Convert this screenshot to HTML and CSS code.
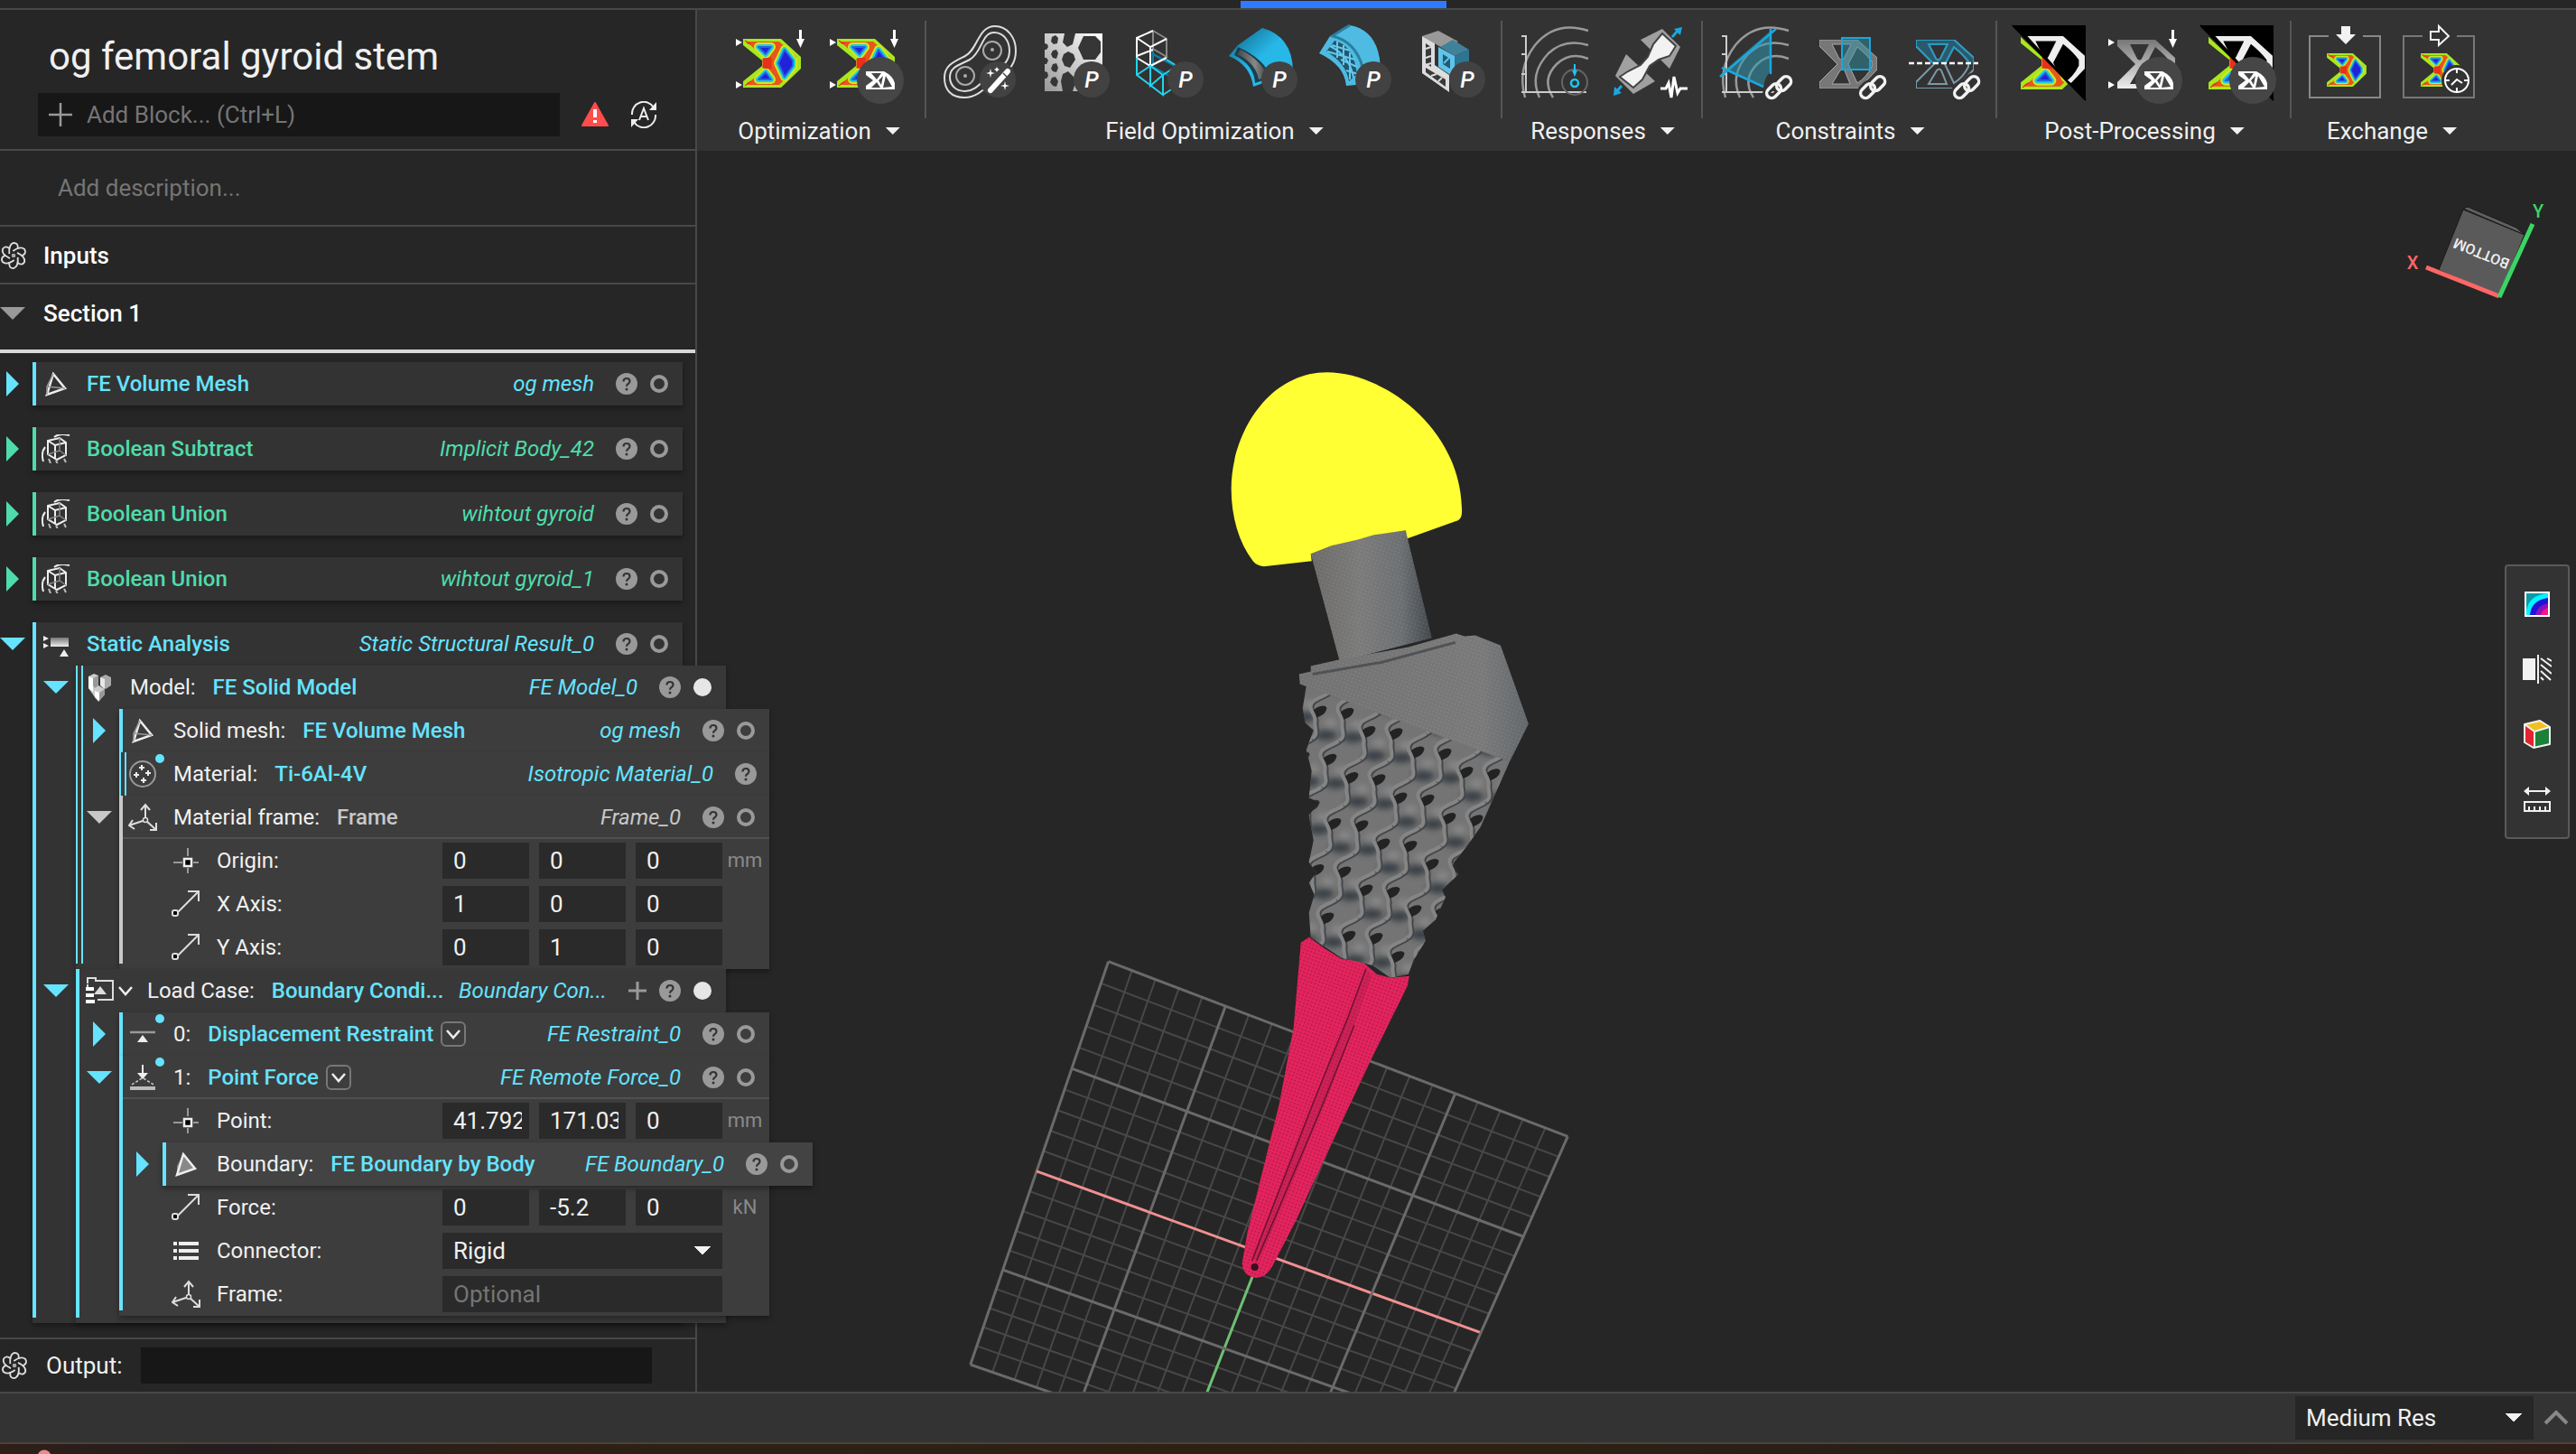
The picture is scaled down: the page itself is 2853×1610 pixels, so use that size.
FILE: index.html
```html
<!DOCTYPE html>
<html lang="en">
<head>
<meta charset="utf-8">
<title>og femoral gyroid stem</title>
<link rel="stylesheet" href="styles.css">
</head>
<body>
<svg class="defs" aria-hidden="true">
  <defs>
    <linearGradient id="g-gray" x1="0" y1="0" x2="0" y2="1"><stop offset="0" stop-color="#777"/><stop offset="1" stop-color="#eee"/></linearGradient>
    <linearGradient id="g-hex" x1="1" y1="0" x2="0" y2="1"><stop offset="0" stop-color="#fff"/><stop offset="1" stop-color="#999"/></linearGradient>
    <linearGradient id="g-shell" x1="0" y1="0" x2="1" y2="1"><stop offset="0" stop-color="#0e5f80"/><stop offset=".5" stop-color="#27b8e8"/><stop offset="1" stop-color="#27b8e8"/></linearGradient>
    <linearGradient id="g-panel" x1="0" y1="0" x2="1" y2="0"><stop offset="0" stop-color="#444"/><stop offset=".6" stop-color="#888"/><stop offset="1" stop-color="#444"/></linearGradient>
    <linearGradient id="g-neck" x1="0" y1="0" x2="1" y2="0"><stop offset="0" stop-color="#6c6a69"/><stop offset=".4" stop-color="#7b7b7a"/><stop offset=".75" stop-color="#6c6f71"/><stop offset="1" stop-color="#41474c"/></linearGradient>
    <linearGradient id="g-body" x1="0" y1="0" x2="1" y2="0"><stop offset="0" stop-color="#727272"/><stop offset=".8" stop-color="#797979"/><stop offset="1" stop-color="#62676b"/></linearGradient>
    <pattern id="p-mesh" width="4" height="4" patternUnits="userSpaceOnUse" patternTransform="rotate(20)"><circle cx="1" cy="1" r="1" fill="#97154d" fill-opacity=".6"/></pattern>
    <pattern id="p-fine" width="4" height="4" patternUnits="userSpaceOnUse" patternTransform="rotate(20)"><circle cx="1" cy="1" r="1" fill="#fff" fill-opacity=".08"/></pattern>
    <filter id="f-soft" x="-50%" y="-50%" width="200%" height="200%"><feGaussianBlur stdDeviation="3"/></filter>
    <clipPath id="c-lattice"><path d="M1440 750 1447 759 1443 784 1446 800 1455 808 1447 830 1453 853 1450 883 1462 888 1450 902 1455 930 1450 954 1458 966 1450 977 1456 990 1450 1010 1452 1037 1465 1046 1486 1060 1520 1068 1540 1082 1560 1078 1566 1062 1579 1041 1576 1030 1590 1018 1601 993 1597 985 1615 968 1610 955 1625 936 1640 915 1672 843 1660 835Z"/></clipPath>
    <clipPath id="c-upper"><path d="M-2-6 84-6 84 78 60 62 40 40Z"/></clipPath>
    <clipPath id="c-lower"><path d="M0 0 4 10 40 44 60 66 60 80 0 80Z"/></clipPath>

    <symbol id="topopt" viewBox="0 0 64 54">
      <path d="M0 0H42L64 20V33L42 54H0V47L21 30V24L0 7Z" fill="#a8e81c"/>
      <path d="M4 3H40L59 20V32L40 51H4L24 32V22Z" fill="#e8561d"/>
      <g stroke-linejoin="round">
        <path d="M17 9H31L25 17ZM17 45H31L25 37ZM39 27 46 12 55 24V30L46 42Z" fill="none" stroke="#d4e81c" stroke-width="10"/>
        <path d="M17 9H31L25 17ZM17 45H31L25 37ZM39 27 46 12 55 24V30L46 42Z" fill="#2222d8" stroke="#22cfd8" stroke-width="6"/>
        <path d="M17 9H31L25 17ZM17 45H31L25 37ZM39 27 46 12 55 24V30L46 42Z" fill="#2222d8" stroke="#2266e0" stroke-width="2"/>
      </g>
      <path d="M2 2 9 6 5 5ZM2 52 9 47 5 49ZM22 22 31 21V33L22 32Z" fill="#e8301c" stroke="#e8301c"/>
    </symbol>
    <symbol id="truss" viewBox="0 0 64 54">
      <path fill-rule="evenodd" d="M0 0H42L64 20V33L44 54H0V47L20 27 0 7ZM14 5 22 21Q25 24 27 21L35 5ZM14 49 23 34Q26 31 28 34L34 49ZM32 27 42 8Q52 16 58 24V30Q52 42 42 48Z"/>
    </symbol>
    <symbol id="loads" viewBox="0 0 80 80" overflow="visible"><path d="M0 15 7 19 0 23ZM0 62 7 66 0 70ZM70 5H73V15H76L71.500 25 67 15H70Z" fill="#fff"/></symbol>
    <symbol id="badge-truss" viewBox="0 0 80 80" overflow="visible"><circle cx="56" cy="61" r="26" fill="#464646"/><path fill="#fff" fill-rule="evenodd" d="M40 51H60Q70 56 72 64V71H40V67L48 61 40 55ZM46 53 52 60 57 53ZM46 69 52 63 56 69ZM59 69 62 56 69 68ZM54 61 59 56 57 66Z"/></symbol>
    <symbol id="badge-p" viewBox="0 0 80 80" overflow="visible"><circle cx="60" cy="60" r="20" fill="#424242"/><text x="60" y="69" text-anchor="middle" class="badge-letter">P</text></symbol>
    <symbol id="chain" viewBox="0 0 80 80" overflow="visible">
      <g fill="none" stroke="#333" stroke-width="9"><rect x="51" y="67" width="18" height="11" rx="5.500" transform="rotate(-45 60 73)"/><rect x="62" y="59" width="18" height="11" rx="5.500" transform="rotate(-45 71 65)"/></g>
      <g fill="none" stroke="#f2f2f2" stroke-width="3.500"><rect x="51" y="67" width="18" height="11" rx="5.500" transform="rotate(-45 60 73)"/><rect x="62" y="59" width="18" height="11" rx="5.500" transform="rotate(-45 71 65)"/></g>
    </symbol>
    <symbol id="field" viewBox="0 0 80 80" overflow="visible">
      <g fill="none" stroke="#999" stroke-width="2.500"><path d="M76 6Q40-6 17 22-3 48 6 80"/><path d="M76 22Q50 14 32 31 10 54 22 80"/><path d="M76 37Q56 29 41 43 24 60 37 80"/></g>
      <path d="M7 12V74M2 12H8M2 32H8M2 54H8M2 74H74" fill="none" stroke="#ccc" stroke-width="2"/>
    </symbol>

    <symbol id="help" viewBox="0 0 24 24"><circle cx="12" cy="12" r="12" fill="#999"/><path d="M8.500 9.500Q8.500 6 12 6t3.500 3.300Q15.500 11 13.500 12.200 12 13.200 12 14.800" fill="none" stroke="#333" stroke-width="2.200"/><circle cx="12" cy="18" r="1.500" fill="#333"/></symbol>
    <symbol id="ring" viewBox="0 0 20 20"><circle cx="10" cy="10" r="8" fill="none" stroke="#999" stroke-width="4"/></symbol>
    <symbol id="disc" viewBox="0 0 20 20"><circle cx="10" cy="10" r="10" fill="#e6e6e6"/></symbol>
    <symbol id="gyro" viewBox="0 0 32 32"><g fill="none" stroke="#ddd" stroke-width="2"><path d="M11 14Q10 3 16 1 22 1 21 8"/><path d="M11 14Q10 3 16 1 22 1 21 8" transform="rotate(60 16 16)"/><path d="M11 14Q10 3 16 1 22 1 21 8" transform="rotate(120 16 16)"/><path d="M11 14Q10 3 16 1 22 1 21 8" transform="rotate(180 16 16)"/><path d="M11 14Q10 3 16 1 22 1 21 8" transform="rotate(240 16 16)"/><path d="M11 14Q10 3 16 1 22 1 21 8" transform="rotate(300 16 16)"/></g><circle cx="16" cy="16" r="2.500" fill="#aaa"/></symbol>
    <symbol id="mesh" viewBox="0 0 32 32"><path d="M13 5 26 21 6 28Z" fill="none" stroke="#eee" stroke-width="2.500"/><path d="M6 19 26 21M6 19 13 5M6 19V28" stroke="#999" stroke-width="1.500" fill="none"/></symbol>
    <symbol id="meshfill" viewBox="0 0 32 32"><path d="M13 5 26 21 6 28V18Z" fill="#888"/><path d="M13 5 26 21 6 28Z" fill="none" stroke="#eee" stroke-width="2.500"/></symbol>
    <symbol id="bool" viewBox="0 0 32 32"><g fill="none" stroke="#eee" stroke-width="2"><path d="M7 7 20 4 27 9V23L17 28 7 22ZM7 7 15 12 27 9M15 12V27"/><path d="M2 30Q-1 20 4 14M14 3Q20-2 31 1" /><path d="M8 27 10 32M16 29 18 33M25 27 27 31" stroke="#bbb"/><path d="M20 4V18L7 22M20 18 27 23" stroke="#888" stroke-width="1.500"/></g></symbol>
    <symbol id="static" viewBox="0 0 32 32"><rect x="10" y="9" width="20" height="10" fill="url(#g-gray)"/><path d="M2 7 8 10 2 13ZM2 15 8 18 2 21ZM20 30 25 22 30 30Z" fill="#eee"/></symbol>
    <symbol id="model" viewBox="0 0 32 32"><path d="M4 4 10 1 15 3V14L22 18V24L15 32 11 27 4 17Z" fill="#ccc"/><path d="M17 5 23 2 29 5V14L23 18 17 14Z" fill="#aaa"/><path d="M4 4 9 6V21L4 17ZM11 20 16 22V31L11 27Z" fill="#fff"/><path d="M17 5 22 7V18L17 14Z" fill="#e8e8e8"/><path d="M9 6 15 3V14L11 17 9 14ZM16 22 22 18V24L16 31Z" fill="#999"/></symbol>
    <symbol id="material" viewBox="0 0 32 32"><circle cx="16" cy="16" r="14" fill="none" stroke="#999" stroke-width="2"/><path d="M15 6V12M12 9H18M9 14V20M6 17H12M22 12V18M19 15H25M17 20V26M14 23H20" stroke="#eee" stroke-width="2"/></symbol>
    <symbol id="frame" viewBox="0 0 32 32"><path d="M19 19V2M14 8 19 2 24 8M19 19 1 25M5 19 1 25 7 29M19 19 31 30M31 22V30H24" fill="none" stroke="#ddd" stroke-width="2"/><circle cx="19" cy="19" r="2.500" fill="#333" stroke="#ddd" stroke-width="1.500"/></symbol>
    <symbol id="point" viewBox="0 0 32 32"><path d="M18 2V11M18 24V30M2 18H12M24 18H30" stroke="#999" stroke-width="2"/><rect x="14" y="14" width="8" height="8" fill="#000" stroke="#eee" stroke-width="2.500"/></symbol>
    <symbol id="vector" viewBox="0 0 32 32"><path d="M6 26 30 2M18 2H30V13" fill="none" stroke="#ddd" stroke-width="2"/><rect x="1" y="23" width="6" height="6" rx="2" fill="#000" stroke="#ddd" stroke-width="2"/></symbol>
    <symbol id="restraint" viewBox="0 0 32 32"><path d="M2 14H30" stroke="#999" stroke-width="2.500"/><path d="M10 25 16 17 22 25Z" fill="#eee"/></symbol>
    <symbol id="force" viewBox="0 0 32 32"><path d="M15 2H17V11H22L16 18 10 11H15Z" fill="#eee"/><path d="M15 17 4 24M17 17 28 24" stroke="#ccc" stroke-width="1.500" stroke-dasharray="3 2"/><rect x="2" y="26" width="28" height="4" fill="#bbb"/></symbol>
    <symbol id="list" viewBox="0 0 32 32"><path d="M2 8H6M8 8H30M2 16H6M8 16H30M2 24H6M8 24H30" stroke="#eee" stroke-width="4"/></symbol>
    <symbol id="case" viewBox="0 0 32 32"><path d="M3 8V2H12V5H31V26H14M3 9V12" fill="none" stroke="#ddd" stroke-width="2"/><path d="M10 20 17 11 24 20Z" fill="#ddd"/><path d="M1 14H10M1 21H10M1 28H11" stroke="#fff" stroke-width="4"/></symbol>
    <symbol id="chev" viewBox="0 0 16 16"><path d="M1 4 8 12 15 4" fill="none" stroke="#eee" stroke-width="2.500"/></symbol>
  </defs>
</svg>

<div class="app">
  <div class="tabstrip"><span class="tab-active"></span></div>

  <div class="main">
    <aside class="sidebar">
      <header class="doc-head">
        <h1>og femoral gyroid stem</h1>
        <div class="add-line">
          <label class="add-box"><svg width="26" height="26" viewBox="0 0 26 26"><path d="M13 0V26M0 13H26" stroke="#999" stroke-width="2.500"/></svg><input type="text" placeholder="Add Block... (Ctrl+L)" aria-label="Add block"></label>
          <button class="plain" aria-label="Warnings"><svg width="30" height="28" viewBox="0 0 30 28"><path d="M15 1 29 26H1Z" fill="#ff4d4d" stroke="#ff4d4d" stroke-width="2" stroke-linejoin="round"/><path d="M15 8V17M15 20V23" stroke="#fff" stroke-width="4"/></svg></button>
          <button class="plain" aria-label="Automatic run"><svg width="30" height="30" viewBox="0 0 30 30"><g fill="none" stroke="#eee" stroke-width="2"><path d="M2 15A13 13 0 0 1 26 7M28 15A13 13 0 0 1 4 23"/><path d="M10 21 15 8 20 21M12 17H18"/></g><path d="M29 1V10H21ZM1 29V20H9Z" fill="#eee"/></svg></button>
        </div>
      </header>
      <input class="description" type="text" placeholder="Add description..." aria-label="Description">
      <h2 class="section inputs"><svg width="30" height="30"><use href="#gyro"/></svg>Inputs</h2>
      <h2 class="section first"><span class="tri down gray"></span>Section 1</h2>

      <div class="tree">
        <div class="node"><button class="tri right" aria-label="Expand"></button>
          <div class="card"><div class="row"><svg class="ico"><use href="#mesh"/></svg><b>FE Volume Mesh</b><i>og mesh</i><svg class="q"><use href="#help"/></svg><svg class="o"><use href="#ring"/></svg></div></div></div>
        <div class="node green"><button class="tri right" aria-label="Expand"></button>
          <div class="card"><div class="row"><svg class="ico"><use href="#bool"/></svg><b>Boolean Subtract</b><i>Implicit Body_42</i><svg class="q"><use href="#help"/></svg><svg class="o"><use href="#ring"/></svg></div></div></div>
        <div class="node green"><button class="tri right" aria-label="Expand"></button>
          <div class="card"><div class="row"><svg class="ico"><use href="#bool"/></svg><b>Boolean Union</b><i>wihtout gyroid</i><svg class="q"><use href="#help"/></svg><svg class="o"><use href="#ring"/></svg></div></div></div>
        <div class="node green"><button class="tri right" aria-label="Expand"></button>
          <div class="card"><div class="row"><svg class="ico"><use href="#bool"/></svg><b>Boolean Union</b><i>wihtout gyroid_1</i><svg class="q"><use href="#help"/></svg><svg class="o"><use href="#ring"/></svg></div></div></div>

        <div class="node"><button class="tri down" aria-label="Collapse"></button>
          <div class="card open">
            <div class="row"><svg class="ico"><use href="#static"/></svg><b>Static Analysis</b><i>Static Structural Result_0</i><svg class="q"><use href="#help"/></svg><svg class="o"><use href="#ring"/></svg></div>

            <div class="node"><button class="tri down" aria-label="Collapse"></button>
              <div class="card l1 open double">
                <div class="row"><svg class="ico"><use href="#model"/></svg><span>Model:</span><b>FE Solid Model</b><i>FE Model_0</i><svg class="q"><use href="#help"/></svg><svg class="o"><use href="#disc"/></svg></div>
                <div class="node"><button class="tri right" aria-label="Expand"></button>
                  <div class="card l2"><div class="row"><svg class="ico"><use href="#mesh"/></svg><span>Solid mesh:</span><b>FE Volume Mesh</b><i>og mesh</i><svg class="q"><use href="#help"/></svg><svg class="o"><use href="#ring"/></svg></div></div></div>
                <div class="node"><span></span>
                  <div class="card l2 double"><div class="row dotted"><svg class="ico"><use href="#material"/></svg><span>Material:</span><b>Ti-6Al-4V</b><i>Isotropic Material_0</i><svg class="q last"><use href="#help"/></svg></div></div></div>
                <div class="node neutral"><button class="tri down" aria-label="Collapse"></button>
                  <div class="card l2 open">
                    <div class="row ruled"><svg class="ico"><use href="#frame"/></svg><span>Material frame:</span><b>Frame</b><i>Frame_0</i><svg class="q"><use href="#help"/></svg><svg class="o"><use href="#ring"/></svg></div>
                    <div class="prop"><svg class="ico"><use href="#point"/></svg><span>Origin:</span><input value="0" aria-label="Origin x"><input value="0" aria-label="Origin y"><input value="0" aria-label="Origin z"><em>mm</em></div>
                    <div class="prop"><svg class="ico"><use href="#vector"/></svg><span>X Axis:</span><input value="1" aria-label="X axis x"><input value="0" aria-label="X axis y"><input value="0" aria-label="X axis z"></div>
                    <div class="prop"><svg class="ico"><use href="#vector"/></svg><span>Y Axis:</span><input value="0" aria-label="Y axis x"><input value="1" aria-label="Y axis y"><input value="0" aria-label="Y axis z"></div>
                  </div></div>
              </div></div>

            <div class="node"><button class="tri down" aria-label="Collapse"></button>
              <div class="card l1 open tail">
                <div class="row case"><svg class="ico"><use href="#case"/></svg><svg class="chev"><use href="#chev"/></svg><span>Load Case:</span><b>Boundary Condi...</b><i>Boundary Con...</i><svg class="plus" viewBox="0 0 20 20"><path d="M10 0V20M0 10H20" stroke="#999" stroke-width="3"/></svg><svg class="q"><use href="#help"/></svg><svg class="o"><use href="#disc"/></svg></div>
                <div class="node"><button class="tri right" aria-label="Expand"></button>
                  <div class="card l2"><div class="row dotted"><svg class="ico"><use href="#restraint"/></svg><span>0:</span><b>Displacement Restraint</b><button class="type" aria-label="Change type"><svg class="chev"><use href="#chev"/></svg></button><i>FE Restraint_0</i><svg class="q"><use href="#help"/></svg><svg class="o"><use href="#ring"/></svg></div></div></div>
                <div class="node"><button class="tri down" aria-label="Collapse"></button>
                  <div class="card l2 open">
                    <div class="row ruled dotted"><svg class="ico"><use href="#force"/></svg><span>1:</span><b>Point Force</b><button class="type" aria-label="Change type"><svg class="chev"><use href="#chev"/></svg></button><i>FE Remote Force_0</i><svg class="q"><use href="#help"/></svg><svg class="o"><use href="#ring"/></svg></div>
                    <div class="prop"><svg class="ico"><use href="#point"/></svg><span>Point:</span><input value="41.792" aria-label="Point x"><input value="171.03" aria-label="Point y"><input value="0" aria-label="Point z"><em>mm</em></div>
                    <div class="node"><button class="tri right" aria-label="Expand"></button>
                      <div class="card l3"><div class="row"><svg class="ico"><use href="#meshfill"/></svg><span>Boundary:</span><b>FE Boundary by Body</b><i>FE Boundary_0</i><svg class="q"><use href="#help"/></svg><svg class="o"><use href="#ring"/></svg></div></div></div>
                    <div class="prop"><svg class="ico"><use href="#vector"/></svg><span>Force:</span><input value="0" aria-label="Force x"><input value="-5.2" aria-label="Force y"><input value="0" aria-label="Force z"><em>kN</em></div>
                    <div class="prop"><svg class="ico"><use href="#list"/></svg><label for="connector">Connector:</label><select id="connector" class="wide"><option>Rigid</option></select></div>
                    <div class="prop"><svg class="ico"><use href="#frame"/></svg><label for="frame-in">Frame:</label><input id="frame-in" class="wide" placeholder="Optional"></div>
                  </div></div>
              </div></div>
          </div></div>
      </div>

      <div class="output"><svg width="30" height="30"><use href="#gyro"/></svg><label for="out">Output:</label><input id="out" type="text"></div>
    </aside>

    <section class="stage">
      <nav class="ribbon">
        <div class="group">
          <div class="tools">
            <button aria-label="Topology optimization"><svg viewBox="0 0 80 80"><use href="#loads"/><use href="#topopt" x="8" y="15" width="64" height="54"/></svg></button>
            <button aria-label="Smoothed topology optimization"><svg viewBox="0 0 80 80"><use href="#loads"/><use href="#topopt" x="8" y="15" width="64" height="54"/><use href="#badge-truss"/></svg></button>
          </div>
          <button class="menu">Optimization</button>
        </div>
        <div class="group">
          <div class="tools">
            <button aria-label="Field optimization"><svg viewBox="0 0 80 80"><g fill="none" stroke="#ddd" stroke-width="2"><path d="M57 1C71 1 80 14 80 28 80 46 70 50 62 57 48 66 40 80 23 80 9 80 1 72 1 58 1 44 12 40 24 34 38 27 38 1 57 1Z"/><path d="M56 8C67 8 73 18 73 28 73 42 64 45 54 53 42 62 36 73 24 73 13 73 7 66 7 57 7 46 18 44 29 38 43 30 42 8 56 8Z"/><circle cx="54" cy="28" r="10" stroke="#aaa"/><circle cx="24" cy="56" r="10" stroke="#aaa"/></g><circle cx="54" cy="27" r="2" fill="#aaa"/><circle cx="24" cy="56" r="2" fill="#aaa"/><circle cx="60" cy="60" r="20" fill="#424242"/><path d="M52 72 71 51" stroke="#fff" stroke-width="6" stroke-linecap="round"/><path d="M66 53 70 57" stroke="#424242" stroke-width="1.500"/><path d="M52 48 53 52 57 53 53 54 52 58 51 54 47 53 51 52ZM68 62 69 66 73 67 69 68 68 72 67 68 63 67 67 66ZM59 46 60 48 62 49 60 50 59 52 58 50 56 49 58 48Z" fill="#fff"/></svg></button>
            <button aria-label="Honeycomb parameters"><svg viewBox="0 0 80 80"><rect x="8" y="9" width="64" height="64" fill="url(#g-hex)"/><g fill="#363636"><path d="M51 12H64L70 18V30L64 38H51L45 25ZM51 44H64L70 50V62L64 70H51L45 56ZM30 9H42L39 21 33 24 28 19ZM29 32 34 29 40 32 42 38 36 47 30 45 27 38ZM28 54 34 51 40 57 42 64 39 73H28L26 62Z"/><path d="M16 13 20 11 23 14 22 20 18 21 15 18ZM17 28 21 27 23 31 21 37 17 36 15 32ZM17 43 21 42 23 47 21 52 17 51 15 48ZM16 58 20 57 23 62 21 68 17 67 14 63ZM8 20 11 21 12 24 10 27H8ZM8 36 10 36 12 39 10 43H8ZM8 51 11 52 12 56 10 59H8Z"/></g><use href="#badge-p"/></svg></button>
            <button aria-label="Lattice parameters"><svg viewBox="0 0 80 80"><g fill="none" stroke-width="2"><path d="M24 6 39 15V35M24 6V26L39 35 21 45" stroke="#888"/><path d="M24 28V46L49 60M24 32 50 46" stroke="#0d7ea8"/><path d="M24 6 6 14V36L21 45V24L39 15M6 14 21 24M6 34 24 27M21 45 39 36" stroke="#fff"/><path d="M6 36V55L35 77V55L21 45M6 55 21 45V67L35 55 49 46M35 77 49 68M39 38 52 46" stroke="#23d3ee"/></g><use href="#badge-p"/></svg></button>
            <button aria-label="Shell parameters"><svg viewBox="0 0 80 80"><path d="M41 3Q74 12 75 50L58 58 31 68Q28 44 4 34L14 22Z" fill="url(#g-shell)"/><path d="M14 24Q45 38 50 58L33 64Q32 44 10 33Z" fill="#1b3f4e"/><path d="M17 27Q42 40 46 57L37 60Q34 42 13 32Z" fill="url(#g-panel)"/><use href="#badge-p"/></svg></button>
            <button aria-label="Ribbed shell parameters"><svg viewBox="0 0 80 80"><path d="M34 0Q68 6 68 52L40 66 30 67Q28 44 0 31L12 12Z" fill="#4fbbe2"/><path d="M34 0Q20 8 15 12 40 18 48 46" fill="none" stroke="#2b7fa0" stroke-width="3"/><path d="M17 17Q38 22 42 54L33 62Q30 42 8 29Z" fill="#23566b"/><path d="M12 23Q34 34 38 58M20 18V36M27 22V44M34 30V60M14 22 34 28M9 29 40 38M24 38 42 46M30 50 43 54" stroke="#64c8ec" stroke-width="2" fill="none"/><use href="#badge-p"/></svg></button>
            <button aria-label="Box parameters"><svg viewBox="0 0 80 80"><path d="M10 12 28 6 50 18 34 26Z" fill="#999"/><path d="M30 24 44 16 62 27 46 34Z" fill="#42819a"/><path d="M46 34 62 27V52L46 60Z" fill="#2d7590"/><path d="M10 12 24 20V44L40 55V74L10 53Z" fill="#ddd"/><path d="M14 20 20 24V46L14 42ZM14 47 36 60V68L14 52Z" fill="#3a3a3a"/><path d="M14 26 20 24M14 36 20 34M14 44 20 42M20 56 26 54M28 62 32 58" stroke="#ddd" stroke-width="2"/><path d="M28 24 46 34V58L28 46Z" fill="#5ec4ea"/><path d="M33 32 41 37V48L33 43Z" fill="#245a70"/><path d="M34 42 40 36" stroke="#5ec4ea" stroke-width="2"/><use href="#badge-p"/></svg></button>
          </div>
          <button class="menu">Field Optimization</button>
        </div>
        <div class="group">
          <div class="tools">
            <button aria-label="Point response"><svg viewBox="0 0 80 80"><use href="#field"/><circle cx="61" cy="63" r="14" fill="none" stroke="#666" stroke-width="2"/><path d="M61 43V51" stroke="#22c3ee" stroke-width="2"/><path d="M58 50H64L61 57Z" fill="#22c3ee"/><circle cx="61" cy="64" r="4" fill="none" stroke="#22c3ee" stroke-width="2.500"/></svg></button>
            <button aria-label="Stress response"><svg viewBox="0 0 80 80"><path d="M30 16 54 4 74 24 62 48ZM2 56 14 32 46 62 22 76Z" fill="#a0a0a0"/><path d="M54 9 69 23 62 34 50 38 40 45 32 60 22 69 7 57 16 51 30 44 38 35 44 21Z" fill="#f2f2f2" stroke="#444" stroke-width="2"/><path d="M65 13 72 5M9 67 3 74" stroke="#1aa7e0" stroke-width="3"/><path d="M67 4 76 2 74 11ZM1 68 0 78 9 75Z" fill="#1aa7e0"/><path d="M52 70H58L61 64 64 80 67 57 71 75 74 70H82" fill="none" stroke="#fff" stroke-width="3"/></svg></button>
          </div>
          <button class="menu">Responses</button>
        </div>
        <div class="group">
          <div class="tools">
            <button aria-label="Field constraint"><svg viewBox="0 0 80 80"><use href="#field"/><path d="M6 49 56 6V51Q50 56 48 68Z" fill="#2f98ad" fill-opacity=".55"/><path d="M0 57 62 4M56 4V54M2 47 48 68" stroke="#1aa7e0" stroke-width="2.500"/><use href="#chain"/></svg></button>
            <button aria-label="Region constraint"><svg viewBox="0 0 80 80"><use href="#truss" x="6" y="16" width="64" height="54" fill="#777" stroke="#aaa"/><rect x="31" y="14" width="31" height="35" fill="#2f98ad" fill-opacity=".45" stroke="#1aa7e0" stroke-width="2"/><use href="#chain"/></svg></button>
            <button aria-label="Planar constraint"><svg viewBox="0 0 80 80"><use href="#truss" x="9" y="16" width="64" height="54" fill="#333" stroke="#7a9aa5" stroke-width="2"/><svg x="9" y="16" width="64" height="26" viewBox="0 0 64 26"><use href="#truss" width="64" height="54" fill="#2a5a6c" stroke="#2b9bc4" stroke-width="2"/></svg><path d="M1 42H78" stroke="#fff" stroke-width="2.500" stroke-dasharray="6 3"/><use href="#chain"/></svg></button>
          </div>
          <button class="menu">Constraints</button>
        </div>
        <div class="group">
          <div class="tools">
            <button aria-label="Threshold result"><svg viewBox="0 0 80 80"><path d="M-2 0H79V83Z"/><g clip-path="url(#c-lower)"><use href="#topopt" x="7" y="12" width="70" height="59"/></g><g clip-path="url(#c-upper)"><use href="#truss" x="8" y="12" width="70" height="59" fill="#eee"/></g><path d="M-2 0 79 83" stroke="#000" stroke-width="2"/></svg></button>
            <button aria-label="Smoothed body"><svg viewBox="0 0 80 80"><use href="#loads"/><use href="#truss" x="10" y="16" width="64" height="54" fill="url(#g-gray)"/><use href="#badge-truss"/></svg></button>
            <button aria-label="Smoothed threshold result"><svg viewBox="0 0 80 80"><path d="M-2 0H79V83Z"/><g clip-path="url(#c-lower)"><use href="#topopt" x="7" y="12" width="70" height="59"/></g><g clip-path="url(#c-upper)"><use href="#truss" x="8" y="12" width="70" height="59" fill="#eee"/></g><path d="M-2 0 79 83" stroke="#000" stroke-width="2"/><use href="#badge-truss"/></svg></button>
          </div>
          <button class="menu">Post-Processing</button>
        </div>
        <div class="group">
          <div class="tools">
            <button aria-label="Import result"><svg viewBox="0 0 80 80"><path d="M22 12H1V80H79V12H60" fill="none" stroke="#888" stroke-width="2"/><path d="M36 1H46V10H52L41 21 30 10H36Z" fill="#f2f2f2"/><use href="#topopt" x="20" y="31" width="44" height="37"/></svg></button>
            <button aria-label="Export result"><svg viewBox="0 0 80 80"><path d="M22 12H1V80H79V12H60" fill="none" stroke="#777" stroke-width="2"/><path d="M31 7H40V1L51 12 40 22V16H31Z" fill="none" stroke="#f2f2f2" stroke-width="2"/><use href="#topopt" x="20" y="31" width="44" height="37"/><circle cx="60" cy="61" r="17" fill="#333"/><circle cx="60" cy="61" r="13" fill="none" stroke="#fff" stroke-width="2"/><path d="M60 48V53M60 69V74M47 61H52M68 61H73M54 66 60 60 66 64" stroke="#fff" stroke-width="2" fill="none"/></svg></button>
          </div>
          <button class="menu">Exchange</button>
        </div>
      </nav>

      <div class="viewport">
        <svg class="scene" viewBox="772 167 2081 1373" preserveAspectRatio="xMidYMid slice" role="img" aria-label="Femoral stem model">
          <g id="grid"></g>
          <path d="M1441 1043 1450 1037 1468 1050 1486 1061 1509 1064 1525 1078 1540 1082 1561 1080 1559 1091 1518 1174 1465 1287 1435 1352 1409 1402Q1402 1414 1391 1414 1377 1412 1376 1398L1382 1363 1417 1222 1433 1137Z" fill="#e5245c"/>
          <path d="M1513 1072 1493 1126 1454 1222 1388 1388 1392 1400 1408 1365 1480 1190 1500 1135 1519 1080Z" fill="#c01f50" fill-opacity=".6"/>
          <path d="M1441 1043 1450 1037 1468 1050 1486 1061 1509 1064 1525 1078 1540 1082 1561 1080 1559 1091 1518 1174 1465 1287 1435 1352 1409 1402Q1402 1414 1391 1414 1377 1412 1376 1398L1382 1363 1417 1222 1433 1137Z" fill="url(#p-mesh)"/>
          <path d="M1513 1072 1493 1126 1454 1222 1387 1395M1500 1135 1460 1235 1392 1395" fill="none" stroke="#6d1233" stroke-width="1.500"/>
          <circle cx="1390" cy="1402" r="4" fill="#3a0f1e"/>
          <g clip-path="url(#c-lattice)"><path d="M1430 740H1700V1090H1430Z" fill="#747474"/><g id="gyroid"></g></g>
          <path d="M1452 613 1475 604 1505 596 1522 591 1557 587 1586 706 1484 732Z" fill="url(#g-neck)"/>
          <path d="M1452 613 1475 604 1505 596 1522 591 1557 587 1586 706 1484 732Z" fill="url(#p-fine)"/>
          <path d="M1439 746 1452 743 1452 737 1483 730 1560 716 1613 701 1622 704 1634 703 1662 714 1693 801 1672 843 1440 757Z" fill="url(#g-body)"/>
          <path d="M1439 746 1452 743 1452 737 1483 730 1560 716 1613 701 1622 704 1634 703 1662 714 1693 801 1672 843 1440 757Z" fill="url(#p-fine)"/>
          <path d="M1454 746 1530 733 1612 711" fill="none" stroke="#505355" stroke-width="3"/>
          <path d="M1470 412C1530 412 1615 470 1619 560 1620 572 1618 575 1612 577L1559 596 1557 587 1522 592 1505 597 1475 604 1452 613 1453 621 1400 627Q1392 626 1388 621C1372 600 1364 571 1364 541 1364 480 1405 412 1470 412Z" fill="#ffff33"/>
        </svg>

        <svg class="cube" width="170" height="130" viewBox="2660 215 170 130" role="img" aria-label="View cube, bottom">
          <path d="M2728 231 2733 229 2787 252 2796 260Z" fill="#606060" stroke="#1a1a1a"/>
          <path d="M2728 232 2796 260 2768 328 2701 299Z" fill="#5a5a5a" stroke="#1a1a1a"/>
          <text x="2748" y="287" transform="rotate(202 2748 281)" text-anchor="middle" class="face">BOTTOM</text>
          <path d="M2687 296 2768 328" stroke="#ff6666" stroke-width="5"/><path d="M2768 329 2805 248" stroke="#3bd565" stroke-width="5"/>
          <text x="2672" y="298" text-anchor="middle" class="axis" fill="#ff6666">X</text><text x="2811" y="241" text-anchor="middle" class="axis" fill="#3bd565">Y</text>
        </svg>

        <div class="panel">
          <button aria-label="Field display"><svg viewBox="0 0 32 32"><rect x="3" y="3" width="26" height="26" fill="#0a9aa8"/><path d="M4 28V24Q6 6 28 4V28Z" fill="#00f6ff"/><path d="M8 28Q9 12 28 9V28Z" fill="#1d12d8"/><path d="M14 28Q16 17 28 15V28Z" fill="#8a12b8"/><path d="M20 28Q21 22 28 20V28Z" fill="#ff1284"/><rect x="3" y="3" width="26" height="26" fill="none" stroke="#fff" stroke-width="2"/></svg></button>
          <button aria-label="Section cut"><svg viewBox="0 0 32 32"><rect y="4" width="14" height="24" fill="#f2f2f2"/><path d="M17 0V32" stroke="#f2f2f2" stroke-width="2"/><path d="M20 4 32 13M20 11 32 21M20 18 31 28M20 25 23 28M27 4 32 7" stroke="#f2f2f2" stroke-width="2"/></svg></button>
          <button aria-label="Display style"><svg viewBox="0 0 32 32"><path d="M2 5 19 1 30 8 13 13Z" fill="#f0c020"/><path d="M2 6 12 12V30L2 24Z" fill="#e0252e"/><path d="M13 13 30 9V27L13 31Z" fill="#1c8038"/><path d="M2 5 19 1 30 8V27L12 31 2 25ZM2 5 13 13 30 8M13 13V31" fill="none" stroke="#f2f2f2" stroke-width="2" stroke-linejoin="round"/></svg></button>
          <button aria-label="Measure"><svg viewBox="0 0 32 32"><path d="M5 7H27" stroke="#f2f2f2" stroke-width="2"/><path d="M1 7 7 2V12ZM31 7 25 2V12Z" fill="#f2f2f2"/><rect x="2" y="19" width="28" height="10" fill="none" stroke="#f2f2f2" stroke-width="2"/><path d="M7 24V28M13 24V28M19 24V28M25 24V28" stroke="#f2f2f2" stroke-width="2"/></svg></button>
        </div>
      </div>
    </section>
  </div>

  <footer class="statusbar">
    <select aria-label="Resolution"><option>Medium Res</option></select>
    <button class="plain" aria-label="Show log"><svg width="28" height="18" viewBox="0 0 28 18"><path d="M2 15 14 3 26 15" fill="none" stroke="#888" stroke-width="4"/></svg></button>
  </footer>
  <div class="taskbar"></div>
</div>
<script src="scene.js"></script>
</body>
</html>
```
FILE: styles.css
```css
* { box-sizing: border-box; }
body { margin: 0; background: #262626; color: #f0f0f0; font: 24px/32px Roboto, "Liberation Sans", sans-serif; overflow: hidden; }
button, input, select { font: inherit; color: inherit; margin: 0; border: 0; border-radius: 0; padding: 0; background: none; outline: 0; }
input::placeholder { color: #757575; opacity: 1; }
h1, h2 { margin: 0; }
svg { display: block; flex: none; }
.defs { position: absolute; width: 0; height: 0; }

.app { display: flex; flex-direction: column; min-height: 100vh; }
.tabstrip { height: 11px; border-bottom: 2px solid #484848; display: flex; padding-left: 1374px; padding-top: 1px; }
.tab-active { width: 228px; background: #2f7bff; }
.main { flex: 1; display: flex; }

.sidebar { width: 772px; flex: none; border-right: 2px solid #484848; display: flex; flex-direction: column; position: relative; z-index: 1; }
.doc-head { height: 156px; border-bottom: 2px solid #484848; padding: 24px 42px 0 42px; }
h1 { font-size: 42px; line-height: 56px; font-weight: 400; padding-left: 12px; }
.add-line { display: flex; align-items: center; gap: 24px; margin-top: 12px; font-size: 26px; }
.add-box { flex: 1; height: 48px; background: #171717; display: flex; align-items: center; gap: 16px; padding-left: 12px; }
.add-box input { flex: 1; }
.description { height: 84px; border-bottom: 2px solid #484848; padding: 0 64px; font-size: 26px; }
.section { font-size: 26px; font-weight: 500; display: flex; align-items: center; height: 64px; color: #fff; }
.inputs { border-bottom: 2px solid #484848; gap: 18px; padding-top: 2px; }
.section.first { height: 76px; padding-bottom: 8px; gap: 20px; border-bottom: 4px solid #d8d8d8; }
.tree { padding: 10px 0 16px; display: flex; flex-direction: column; gap: 24px; }

.node { --accent: #66e3ff; display: flex; width: max-content; }
.node.green { --accent: #4fdcab; }
.node.neutral { --accent: #c8c8c8; }
.tree > .node > .tri { margin-right: 8px; }
.node .node > :first-child { width: 28px; margin: 0 8px 0 12px; }
.tri { width: 28px; height: 48px; flex: none; display: flex; align-items: center; justify-content: center; }
.tri::before { content: ""; background: var(--accent, #999); width: 28px; height: 14px; clip-path: polygon(0 0, 100% 0, 50% 100%); }
.tri.right::before { width: 14px; height: 28px; clip-path: polygon(0 0, 100% 50%, 0 100%); }
.card { width: 720px; background: linear-gradient(var(--accent), var(--accent)) left top / 4px 100% no-repeat #333; box-shadow: 0 3px 6px rgba(0, 0, 0, .35); }
.card.open { background-size: 4px calc(100% - 6px); }
.card.double { background-image: linear-gradient(90deg, var(--accent) 2px, transparent 2px 6px, var(--accent) 6px); background-size: 8px 100%; }
.card.double.open { background-size: 8px calc(100% - 6px); }
.card.l1 { background-color: #383838; }
.card.l2 { background-color: #3d3d3d; }
.card.l3 { background-color: #434343; }
.card.tail { padding-bottom: 8px; }
.row { position: relative; height: 48px; display: flex; align-items: center; padding: 0 16px 0 10px; }
.row.ruled { background: linear-gradient(#505050, #505050) 4px bottom / 716px 2px no-repeat; }
.ico { width: 32px; height: 32px; margin-right: 18px; }
.row span { margin-right: 19px; }
.row b { font-weight: 500; color: var(--accent); }
.row i { margin: 0 24px 0 auto; color: var(--accent); }
.q { width: 24px; height: 24px; margin-right: 14px; }
.q.last { margin: 0 -2px 0 0; }
.row.dotted::after { content: ""; position: absolute; left: 40px; top: 2px; width: 10px; height: 10px; border-radius: 50%; background: #66e3ff; }
.o { width: 20px; height: 20px; }
.chev { width: 16px; height: 16px; }
.row.case .ico { margin-right: 5px; }
.row.case .chev { margin-right: 16px; }
.plus { width: 20px; height: 20px; margin-right: 14px; }
.type { width: 28px; height: 28px; border: 2px solid #777; border-radius: 6px; margin-left: 8px; display: flex; align-items: center; justify-content: center; }
.prop { height: 48px; display: flex; align-items: center; padding-left: 58px; }
.prop span, .prop label { width: 250px; }
.prop input { width: 96px; height: 40px; margin-right: 11px; padding: 0 8px 0 12px; background: #2a2a2a; font-size: 26px; }
.prop em { font-style: normal; font-size: 22px; width: 48px; text-align: center; margin-left: -10px; color: #8a8a8a; }
.prop .wide { width: 310px; height: 40px; padding: 0 12px; font-size: 26px; background: #2a2a2a; margin: 0; }
select { appearance: none; }
.prop select.wide, .statusbar select { background-image: conic-gradient(from -45deg at 50% 100%, #f2f2f2 90deg, transparent 0); background-repeat: no-repeat; background-size: 20px 10px; background-position: right 12px center; }

.output { margin-top: auto; height: 60px; border-top: 2px solid #484848; display: flex; align-items: center; padding: 0 48px 0 1px; gap: 20px; }
.output label { width: 85px; font-size: 26px; }
.output input { flex: 1; height: 40px; background: #171717; }

.stage { flex: 1; display: flex; flex-direction: column; }
.ribbon { height: 156px; background: #333; display: flex; padding-left: 24px; }
.group { padding: 17px 7px 0; display: flex; flex-direction: column; align-items: center; gap: 21px; background: linear-gradient(#555, #555) right 12px / 2px 108px no-repeat; }
.group:first-child { padding-right: 15px; }
.group:last-child { background: none; }
.tools { display: flex; }
.tools button { width: 104px; height: 80px; padding: 0 12px; }
.tools button > svg { width: 80px; height: 80px; overflow: visible; }
.badge-letter { font: italic 500 25px Roboto, sans-serif; fill: #fff; }
.menu { font-size: 26px; line-height: 32px; display: flex; align-items: center; gap: 16px; }
.menu::after { content: ""; width: 16px; height: 8px; background: #f2f2f2; clip-path: polygon(0 0, 100% 0, 50% 100%); }

.viewport { flex: 1; position: relative; }
.scene { position: absolute; width: 100%; height: 100%; }
.cube { position: absolute; top: 48px; right: 23px; }
.face { font: 500 16px Roboto, sans-serif; fill: #f0f0f0; }
.axis { font: 500 20px Roboto, sans-serif; }
.panel { position: absolute; right: 7px; top: 458px; width: 72px; border: 2px solid #5a5a5a; border-radius: 4px; background: #333; padding: 26px 0; display: flex; flex-direction: column; align-items: center; gap: 40px; }
.panel svg { width: 32px; height: 32px; }
.panel button { height: 32px; }

.statusbar { height: 58px; background: #333; border-top: 2px solid #484848; border-bottom: 2px solid #4a433c; display: flex; justify-content: flex-end; align-items: center; gap: 11px; padding-right: 8px; }
.statusbar select { width: 264px; height: 48px; padding: 0 12px; font-size: 26px; background-color: #262626; }
.taskbar { height: 12px; background: radial-gradient(circle at 49px 14px, #e88a90 7px, transparent 8px), linear-gradient(90deg, #2e1f18, #241c1f 9%, #2e2015 20%, #2d2113 60%, #261e1c 80%, #2e1f16); }
```
FILE: scene.js
```js
const NS = "http://www.w3.org/2000/svg";

function add(parent, tag, attrs) {
  const el = document.createElementNS(NS, tag);
  for (const key in attrs) el.setAttribute(key, attrs[key]);
  parent.appendChild(el);
}

// Ground grid: 20 x 20 cells in perspective, a heavier line every 5 cells.
const corners = { tl: [1228, 1064], tr: [1736.4, 1257.5], bl: [1075.3, 1510], br: [1551.4, 1675] };
const along = (t, k) => (t * (1 + k)) / (1 + k * t);
const mix = (a, b, s) => [a[0] + (b[0] - a[0]) * s, a[1] + (b[1] - a[1]) * s];
const grid = document.getElementById("grid");

function gridLine(a, b, color, width) {
  add(grid, "path", { d: `M${a}L${b}`, stroke: color, "stroke-width": width, fill: "none" });
}

for (const major of [false, true]) {
  for (let i = 0; i <= 20; i++) {
    if ((i % 5 === 0) !== major) continue;
    const down = along(i / 20, 0.085);
    const across = along(i / 20, 0.027);
    const color = major ? "#6a6a6a" : "#484848";
    const width = major ? 3 : 2;
    const row = [mix(corners.tl, corners.bl, down), mix(corners.tr, corners.br, down)];
    const col = [mix(corners.tl, corners.tr, across), mix(corners.bl, corners.br, across)];
    gridLine(...col, i === 10 ? "#6fbf73" : color, width);
    gridLine(...row, i === 10 ? "#f09090" : color, width);
  }
}

// Gyroid lattice: holes and wavy walls repeated along two cell vectors.
const gyroid = document.getElementById("gyroid");
const cells = [];
for (let c = -3; c < 7; c++) {
  for (let r = -2; r < 9; r++) {
    const x = 1461.7 + c * 54 - r * 19;
    const y = 787.7 + c * 22.5 + r * 51;
    cells.push([x, y], [x + 30, y + 2.3]);
  }
}
for (const [x, y] of cells) {
  add(gyroid, "ellipse", { cx: x + 7, cy: y + 26, rx: 12, ry: 6, fill: "#34393e", "fill-opacity": 0.85, filter: "url(#f-soft)" });
  add(gyroid, "ellipse", { cx: x + 12, cy: y + 12, rx: 7, ry: 5, fill: "#999", "fill-opacity": 0.5, filter: "url(#f-soft)" });
}
for (const [x, y] of cells) {
  const wall = "M10-21C5-16-11-14-10-5-9 1-4 4-5 11-6 19 0 25-9 30";
  add(gyroid, "path", { d: wall, transform: `translate(${x + 2} ${y + 1})`, fill: "none", stroke: "#43474b", "stroke-width": 4 });
  add(gyroid, "path", { d: "M-8 4Q-8-4 0-6 7-8 8-4 7 2 0 5-6 8-8 4Z", transform: `translate(${x} ${y})`, fill: "#232323" });
  add(gyroid, "path", { d: wall, transform: `translate(${x} ${y})`, fill: "none", stroke: "#858585", "stroke-width": 4 });
}
```
